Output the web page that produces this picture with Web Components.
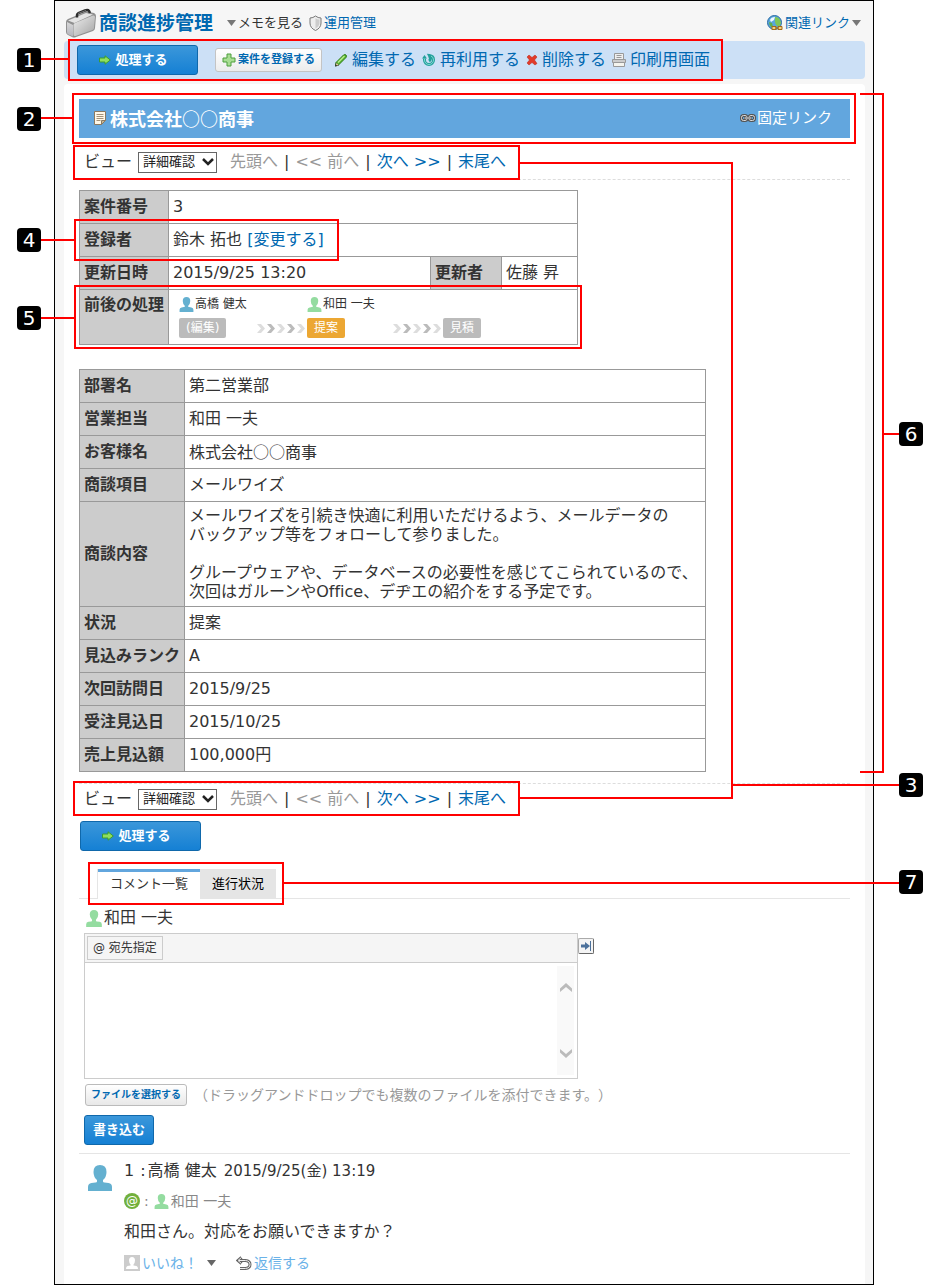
<!DOCTYPE html>
<html lang="ja">
<head>
<meta charset="UTF-8">
<meta name="viewport" content="width=device-width, initial-scale=1.0">
<title>商談進捗管理</title>
<style>
  body {
    margin: 0;
    background: #fff;
    color: #333;
    font-family: "DejaVu Sans", "Noto Sans CJK JP", sans-serif;
    font-size: 16px;
    font-variant-ligatures: none;
    line-height: 24px;
    text-spacing-trim: space-all;
  }
</style>
</head>
<body>
<guide-page></guide-page>

<script>
const baseStyles = `
  * { box-sizing: border-box; }
  a { color: #0068b1; text-decoration: none; }
  button, select, textarea { font-family: inherit; margin: 0; }
`;

const icons = {
  briefcase: ['0 0 32 32', `
    <defs>
      <linearGradient id="g" x1="0" y1="0" x2="1" y2="1"><stop offset="0" stop-color="#ededed"/><stop offset="1" stop-color="#a4a4a4"/></linearGradient>
      <linearGradient id="s" x1="0" y1="0" x2="0" y2="1"><stop offset="0" stop-color="#d8d8d8"/><stop offset="1" stop-color="#b4b4bc"/></linearGradient>
    </defs>
    <path d="M1 15q0-2 2-3L20 5q2-1 4 0l5 1q2 1 2 3l-1 12q0 2-2 3L11 30q-2 1-4 0l-4-2q-2-1-2-3z" fill="#909090"/>
    <path d="M2 15l6 3v11.500l-4.500-2Q2 27 2 25z" fill="url(#s)"/>
    <path d="M8.500 18q0-1.500 1.500-2l18-7.500q2-.5 2 1.500l-1 11q0 1.500-1.500 2L10.500 29q-2 .5-2-1.500z" fill="url(#g)"/>
    <path d="M3 13.500L21 6l7 1.500L9.500 16z" fill="#e4e4e4"/>
    <path d="M12 10.500V8q0-1 1.500-2L20 3.500q3-1 4 .5l1 2" fill="none" stroke="#2c2c2c" stroke-width="2.500"/>
    <path d="M13 6.500l8-3" stroke="#777"/>`],
  shield: ['0 0 13 16', `
    <path d="M6.500 1Q9 3 12 3v5q0 5-5.500 7.500Q1 13 1 8V3q3 0 5.500-2z" fill="#eee" stroke="#777"/>
    <path d="M6.500 3v10.500Q10.500 11 10.500 8V4.500Q8 4.500 6.500 3z" fill="#ccc"/>`],
  globe: ['0 0 16 16', `
    <circle cx="7.500" cy="7.500" r="7" fill="#5aa5dc" stroke="#2b6ca3"/>
    <path d="M8 2q4 0 5 3l1 3-2 4-3-2-1-3z" fill="#7fc656"/>
    <path d="M2 7l3 1 1 4-2 0Q2 10 2 7z" fill="#5fb04a"/>
    <path d="M3 5q1-3 5-3L7 5 4 7z" fill="#eef8ff"/>
    <path d="M5 11.500h4v3H5zM11 11.500h4v3h-4zM8 13h4" fill="#f3d080" stroke="#a36a17"/>`],
  arrow: ['0 0 12 10', '<path d="M.5 3H6V.8L11.300 5 6 9.200V7H.5z" fill="#8fdf5e" stroke="#3d9c2f"/>'],
  plus: ['0 0 14 14', '<path d="M5 1h4v4h4v4H9v4H5V9H1V5h4z" fill="#a8dd92" stroke="#4c9e3d"/>'],
  pencil: ['0 0 14 14', `
    <path d="M2 9.500L9.500 2q1.500-1 2.500 0t0 2.500L4.500 12l-3 1z" fill="#58b52e" stroke="#2f7d1c"/>
    <path d="M4 9.500L10.500 3" stroke="#b9ec8e" stroke-width="1.500"/>
    <path d="M1 13.500l1-4 3 3z" fill="#333"/><path d="M2.500 10l2 2-1.500.5-1-1z" fill="#f0d9a0"/>`],
  recycle: ['0 0 14 14', `
    <path d="M2.500 5.500v1.500a4.500 4.500 0 0 0 9 0q0-4-4-4.500 2 4-.5 5.500" fill="none" stroke="#23a09c" stroke-width="3"/>
    <path d="M2.500 5v2a4.500 4.500 0 0 0 9 0q0-3-2.500-4" fill="none" stroke="#7fd8d0"/>
    <path d="M0 5.500L2.500 2 5 5.500z" fill="#23a09c"/>`],
  cross: ['0 0 12 12', '<path d="M3 1l3 2.500L9 1l2 2-2.500 3L11 9.500 9 11 6 8.500 3 11 1 9l2.500-3L1 3z" fill="#e23b2a" stroke="#b92215" stroke-width=".5"/>'],
  printer: ['0 0 14 14', `
    <path d="M2.500 6V.5h9V6" fill="#eee" stroke="#999"/>
    <path d="M4.500 2.500h5M4.500 4.500h5" stroke="#999"/>
    <path d="M.5 6.500h13v3H.5z" fill="#ccc" stroke="#999"/>
    <path d="M1.500 9.500h11v4h-11z" fill="#f4f4ee" stroke="#999"/>`],
  note: ['0 0 12 14', `
    <path d="M.5.500h11v9l-4 4h-7z" fill="#fff8e8" stroke="#8a7a62"/>
    <path d="M2.500 3.500h7M2.500 5.500h7M2.500 7.500h7M2.500 9.500h4" stroke="#a2927b"/>
    <path d="M7.500 13.500v-4h4z" fill="#c9b895" stroke="#8a7a62"/>`],
  chain: ['0 0 16 8', `
    <g fill="none" stroke="#555" stroke-width="3"><rect x="1.500" y="1.500" width="5.500" height="5" rx="2"/><rect x="9" y="1.500" width="5.500" height="5" rx="2"/></g>
    <g fill="none" stroke="#ddd"><rect x="1.500" y="1.500" width="5.500" height="5" rx="2"/><rect x="9" y="1.500" width="5.500" height="5" rx="2"/></g>
    <path d="M4 4h8" stroke="#555" stroke-width="2.500"/><path d="M4.500 4h7" stroke="#eee"/>`],
  person: ['0 0 24 26', '<path d="M12 0q6.500 0 6.500 7 0 5-3.500 8v1.500q0 1 1.500 1l4 .5Q24 18.500 24 22v4H0v-4q0-3.500 3.500-4l4-.5q1.500 0 1.500-1V15Q5.500 12 5.500 7q0-7 6.500-7z" fill="currentColor"/>'],
  guest: ['0 0 16 16', '<path d="M0 0h16v16H0z" fill="#ccc"/><path d="M8 2q3 0 3 3.500 0 2-1.500 4v1l3 .5q1.500.500 1.500 3H2q0-2.500 1.500-3l3-.5v-1Q5 7.500 5 5.500 5 2 8 2z" fill="#fff"/>'],
  down: ['0 0 9 6', '<path d="M0 0h9L4.500 6z" fill="currentColor"/>'],
  chevrons: ['0 0 48 9', `
    <path d="M0 0h4l4 4.500L4 9H0l4-4.500zM20 0h4l4 4.500L24 9h-4l4-4.500zM40 0h4l4 4.500L44 9h-4l4-4.500z" fill="#ddd"/>
    <path d="M10 0h4l4 4.500L14 9h-4l4-4.500zM30 0h4l4 4.500L34 9h-4l4-4.500z" fill="#bbb"/>`],
  reply: ['0 0 16 14', `
    <path d="M5.500 1.500L2 4.500l3.500 3M3 4.500h6.500q4.500.5 4.500 4t-4.500 4H4" fill="none" stroke="#666" stroke-width="3"/>
    <path d="M5.500 1.500L2 4.500l3.500 3M3 4.500h6.500q4.500.5 4.500 4t-4.500 4H4" fill="none" stroke="#eee"/>`],
  expand: ['0 0 12 10', '<path d="M1 3.500h4V1l5 4-5 4V6.500H1z" fill="#4c719b"/><path d="M10.500 0v10" stroke="#4c719b"/>'],
  scrollUp: ['0 0 12 9', '<path d="M0 9V5.500L6 0l6 5.500V9L6 4z" fill="#bbb"/>'],
  scrollDown: ['0 0 12 9', '<path d="M0 0v3.500L6 9l6-5.500V0L6 5z" fill="#bbb"/>']
};

// <app-icon name="" w="" h="">
class AppIcon extends HTMLElement {
  connectedCallback() {
    const [box, shapes] = icons[this.getAttribute('name')];
    const w = this.getAttribute('w');
    const h = this.getAttribute('h');
    this.attachShadow({ mode: 'open' }).innerHTML = `
      <style>
        :host { display: inline-flex; flex: none; }
        svg { display: block; }
      </style>
      <svg viewBox="${box}" width="${w}" height="${h}" aria-hidden="true">${shapes}</svg>
    `;
  }
}
customElements.define('app-icon', AppIcon);

class ActionButton extends HTMLElement {
  connectedCallback() {
    this.attachShadow({ mode: 'open' }).innerHTML = `
      <style>
        ${baseStyles}
        :host { display: inline-block; vertical-align: top; }
        button {
          display: flex;
          align-items: center;
          justify-content: center;
          gap: 4px;
          height: 30px;
          padding: 0 8px;
          border: 1px solid #0f68ab;
          border-radius: 3px;
          background: linear-gradient(#3b97da, #1580d4);
          color: #fff;
          font-size: 13px;
          font-weight: bold;
          line-height: 20px;
          white-space: nowrap;
          cursor: pointer;
        }
        :host([kind="main"]) button { min-width: 121px; padding-right: 16px; }
        :host([kind="sub"]) button {
          height: 24px;
          padding: 0 5px;
          min-width: 107px;
          border-color: #c4c4c4;
          background: linear-gradient(#fff, #ececec);
          color: #0068b1;
          font-size: 11px;
          gap: 2px;
        }
        :host([kind="file"]) button {
          height: 22px;
          padding: 0 5px;
          border-color: #bbb;
          background: linear-gradient(#fff, #e8e8e8);
          color: #0068b1;
          font-size: 10px;
        }
      </style>
      <button type="button"><slot></slot></button>
    `;
  }
}
customElements.define('action-button', ActionButton);

class AppHeader extends HTMLElement {
  connectedCallback() {
    this.attachShadow({ mode: 'open' }).innerHTML = `
      <style>
        ${baseStyles}
        :host {
          display: flex;
          align-items: center;
          height: 40px;
          padding: 4px 12px 0 10px;
          font-size: 13px;
        }
        h1 { margin: 0 14px 0 2px; font-size: 19px; color: #0068b1; }
        .memo, .admin, .related { display: flex; align-items: center; gap: 2px; }
        .memo { color: #333; }
        .memo app-icon, .related app-icon[name="down"] { color: #777; }
        .admin { margin-left: 6px; }
        .related { margin-left: auto; }
      </style>
      <app-icon name="briefcase" w="32" h="32"></app-icon>
      <h1>商談進捗管理</h1>
      <a class="memo" href="#"><app-icon name="down" w="9" h="6"></app-icon>メモを見る</a>
      <a class="admin" href="#"><app-icon name="shield" w="13" h="16"></app-icon>運用管理</a>
      <a class="related" href="#"><app-icon name="globe" w="16" h="16"></app-icon>関連リンク<app-icon name="down" w="9" h="6"></app-icon></a>
    `;
  }
}
customElements.define('app-header', AppHeader);

class RecordToolbar extends HTMLElement {
  connectedCallback() {
    this.attachShadow({ mode: 'open' }).innerHTML = `
      <style>
        ${baseStyles}
        :host {
          display: flex;
          align-items: center;
          height: 38px;
          margin: 0 8px 0 9px;
          padding-left: 13px;
          border-radius: 4px;
          background: #cce0f6;
        }
        nav { display: flex; gap: 6px; margin-left: 12px; }
        nav a { display: flex; align-items: center; gap: 4px; white-space: nowrap; }
        action-button[kind="sub"] { margin-left: 17px; }
      </style>
      <action-button kind="main"><app-icon name="arrow" w="12" h="10"></app-icon>処理する</action-button>
      <action-button kind="sub"><app-icon name="plus" w="14" h="14"></app-icon>案件を登録する</action-button>
      <nav>
        <a href="#"><app-icon name="pencil" w="14" h="14"></app-icon>編集する</a>
        <a href="#"><app-icon name="recycle" w="14" h="14"></app-icon>再利用する</a>
        <a href="#"><app-icon name="cross" w="12" h="12"></app-icon>削除する</a>
        <a href="#"><app-icon name="printer" w="14" h="14"></app-icon>印刷用画面</a>
      </nav>
    `;
  }
}
customElements.define('record-toolbar', RecordToolbar);

class RecordTitle extends HTMLElement {
  connectedCallback() {
    this.attachShadow({ mode: 'open' }).innerHTML = `
      <style>
        ${baseStyles}
        :host {
          display: flex;
          align-items: center;
          justify-content: space-between;
          height: 39px;
          padding: 0 18px 2px 15px;
          background: #62a6de;
          color: #fff;
        }
        h2 {
          display: flex;
          align-items: center;
          gap: 4px;
          margin: 0;
          font-family: "Noto Sans CJK JP", sans-serif;
          font-size: 18px;
        }
        a { display: flex; align-items: center; gap: 1px; color: #fff; font-size: 15px; }
      </style>
      <h2><app-icon name="note" w="12" h="14"></app-icon><slot></slot></h2>
      <a href="#"><app-icon name="chain" w="16" h="8"></app-icon>固定リンク</a>
    `;
  }
}
customElements.define('record-title', RecordTitle);

class RecordPager extends HTMLElement {
  connectedCallback() {
    this.attachShadow({ mode: 'open' }).innerHTML = `
      <style>
        ${baseStyles}
        :host {
          display: flex;
          align-items: center;
          height: 42px;
          padding: 7px 0 0 5px;
          border-bottom: 1px dashed #ddd;
          white-space: nowrap;
        }
        :host([bottom]) {
          height: 31px;
          margin-top: 11px;
          padding-top: 0;
          border-bottom: 0;
          border-top: 1px dashed #ddd;
        }
        .picker { position: relative; display: flex; align-items: center; margin: 0 13px 0 6px; color: #222; }
        select {
          appearance: none;
          width: 79px;
          height: 21px;
          padding: 0 20px 0 4px;
          border: 1px solid #666;
          border-radius: 0;
          background: #fff;
          color: #222;
          font-size: 13px;
          line-height: 18px;
        }
        .picker svg { position: absolute; right: 3px; pointer-events: none; }
        nav { display: flex; gap: 6px; }
        .off { color: #999; }
      </style>
      <label for="view">ビュー</label>
      <span class="picker">
        <select id="view"><option>詳細確認</option></select>
        <svg width="12" height="8" viewBox="0 0 12 8"><path d="M1 1l5 5 5-5" fill="none" stroke="#222" stroke-width="2.500"/></svg>
      </span>
      <nav>
        <span class="off">先頭へ</span><span>|</span>
        <span class="off">&lt;&lt; 前へ</span><span>|</span>
        <a href="#">次へ &gt;&gt;</a><span>|</span>
        <a href="#">末尾へ</a>
      </nav>
    `;
  }
}
customElements.define('record-pager', RecordPager);

const tableStyles = `
  :host { display: block; }
  table { border-collapse: collapse; table-layout: fixed; max-width: 100%; }
  th, td { height: 33px; padding: 0 4px; border: 1px solid #999; text-align: left; }
  th { background: #ccc; white-space: nowrap; }
`;

class ProcessFlow extends HTMLElement {
  connectedCallback() {
    this.attachShadow({ mode: 'open' }).innerHTML = `
      <style>
        ${baseStyles}
        :host {
          display: grid;
          grid-template-columns: 128px 136px auto;
          grid-template-rows: 20px 20px;
          row-gap: 4px;
          justify-content: start;
          padding: 4px 6px 6px;
          font-size: 12px;
          line-height: 20px;
        }
        .who, .step { display: flex; align-items: center; }
        .step { justify-content: space-between; padding-right: 2px; }
        .who app-icon { color: #94dca0; margin-right: 1px; }
        .who .blue { color: #64b0d0; }
        .state { height: 20px; padding: 0 7px; border-radius: 2px; background: #bbb; color: #fff; }
        .now { background: #eca733; }
      </style>
      <span class="who"><app-icon class="blue" name="person" w="15" h="15"></app-icon>高橋 健太</span>
      <span class="who"><app-icon name="person" w="15" h="15"></app-icon>和田 一夫</span>
      <span></span>
      <span class="step"><span class="state">(編集)</span><app-icon name="chevrons" w="48" h="9"></app-icon></span>
      <span class="step"><span class="state now">提案</span><app-icon name="chevrons" w="48" h="9"></app-icon></span>
      <span class="step"><span class="state">見積</span></span>
    `;
  }
}
customElements.define('process-flow', ProcessFlow);

class RecordSummary extends HTMLElement {
  connectedCallback() {
    this.attachShadow({ mode: 'open' }).innerHTML = `
      <style>
        ${baseStyles}
        ${tableStyles}
        :host { margin-top: 10px; }
        table { width: 499px; }
        .flow th { vertical-align: top; padding-top: 3px; }
        .flow td { height: 55px; }
      </style>
      <table>
        <colgroup><col style="width: 89px"><col style="width: 262px"><col style="width: 71px"><col></colgroup>
        <tr><th>案件番号</th><td colspan="3">3</td></tr>
        <tr><th>登録者</th><td colspan="3">鈴木 拓也 <a href="#">[変更する]</a></td></tr>
        <tr><th>更新日時</th><td>2015/9/25 13:20</td><th>更新者</th><td>佐藤 昇</td></tr>
        <tr class="flow"><th>前後の処理</th><td colspan="3"><process-flow></process-flow></td></tr>
      </table>
    `;
  }
}
customElements.define('record-summary', RecordSummary);

class RecordDetail extends HTMLElement {
  connectedCallback() {
    this.attachShadow({ mode: 'open' }).innerHTML = `
      <style>
        ${baseStyles}
        ${tableStyles}
        :host { margin-top: 24px; }
        table { width: 627px; }
        .kana { padding-bottom: 2px; font-family: "Noto Sans CJK JP", sans-serif; }
        .long { height: 105px; padding: 0 0 2px 4px; line-height: 19px; }
      </style>
      <table>
        <colgroup><col style="width: 105px"><col></colgroup>
        <tr><th>部署名</th><td>第二営業部</td></tr>
        <tr><th>営業担当</th><td>和田 一夫</td></tr>
        <tr><th>お客様名</th><td class="kana">株式会社○○商事</td></tr>
        <tr><th>商談項目</th><td>メールワイズ</td></tr>
        <tr><th>商談内容</th><td class="long">メールワイズを引続き快適に利用いただけるよう、メールデータの<br>バックアップ等をフォローして参りました。<br><br>グループウェアや、データベースの必要性を感じてこられているので、<br>次回はガルーンやOffice、デヂエの紹介をする予定です。</td></tr>
        <tr><th>状況</th><td>提案</td></tr>
        <tr><th>見込みランク</th><td>A</td></tr>
        <tr><th>次回訪問日</th><td>2015/9/25</td></tr>
        <tr><th>受注見込日</th><td>2015/10/25</td></tr>
        <tr><th>売上見込額</th><td>100,000円</td></tr>
      </table>
    `;
  }
}
customElements.define('record-detail', RecordDetail);

class CommentTabs extends HTMLElement {
  connectedCallback() {
    this.attachShadow({ mode: 'open' }).innerHTML = `
      <style>
        ${baseStyles}
        :host {
          display: flex;
          height: 30px;
          margin-top: 18px;
          padding-left: 19px;
          border-bottom: 1px solid #e5e5e5;
        }
        button {
          height: 30px;
          padding: 0 12px;
          border: 0;
          background: #e5e5e5;
          color: #000;
          font-size: 13px;
          line-height: 20px;
        }
        .active {
          padding-bottom: 3px;
          border-top: 3px solid #62a6de;
          box-shadow: -1px 0 #e5e5e5;
          background: #fff;
          color: #333;
        }
      </style>
      <button type="button" class="active">コメント一覧</button>
      <button type="button">進行状況</button>
    `;
  }
}
customElements.define('comment-tabs', CommentTabs);

class CommentForm extends HTMLElement {
  connectedCallback() {
    this.attachShadow({ mode: 'open' }).innerHTML = `
      <style>
        ${baseStyles}
        :host { display: block; padding: 7px 5px 8px; border-bottom: 1px solid #e5e5e5; }
        .user { display: flex; align-items: center; gap: 2px; padding-left: 2px; height: 24px; }
        .user app-icon { color: #94dca0; }
        .row { display: flex; align-items: flex-start; margin-top: 3px; }
        .editor { width: 494px; border: 1px solid #ccc; }
        .bar { height: 29px; padding: 2px; border-bottom: 1px solid #ccc; background: #f5f5f5; }
        .bar button {
          display: block;
          height: 24px;
          padding: 0 5px;
          border: 1px solid #ccc;
          background: #f5f5f5;
          color: #333;
          font-size: 12px;
          line-height: 20px;
        }
        .body { display: flex; height: 115px; padding: 3px; }
        textarea { flex: 1; min-width: 0; padding: 2px; border: 0; outline: 0; resize: none; overflow: hidden; font-size: 16px; }
        .scroll {
          display: flex;
          flex-direction: column;
          align-items: center;
          justify-content: space-between;
          width: 17px;
          padding: 17px 0;
          background: #f9f9f9;
        }
        .wide {
          display: flex;
          align-items: center;
          justify-content: center;
          width: 16px;
          height: 16px;
          margin-top: 5px;
          padding: 0;
          border: 1px solid #aaa;
          border-right-color: #666;
          border-bottom-color: #666;
          border-radius: 2px;
          background: #f4f4f4;
        }
        .file { display: flex; align-items: center; gap: 7px; height: 22px; margin: 5px 0 9px 1px; }
        .hint { color: #999; font-size: 14px; white-space: nowrap; }
      </style>
      <div class="user"><app-icon name="person" w="16" h="17"></app-icon>和田 一夫</div>
      <div class="row">
        <div class="editor">
          <div class="bar"><button type="button">@ 宛先指定</button></div>
          <div class="body">
            <textarea aria-label="コメント"></textarea>
            <div class="scroll">
              <app-icon name="scrollUp" w="12" h="9"></app-icon>
              <app-icon name="scrollDown" w="12" h="9"></app-icon>
            </div>
          </div>
        </div>
        <button type="button" class="wide"><app-icon name="expand" w="12" h="10"></app-icon></button>
      </div>
      <div class="file">
        <action-button kind="file">ファイルを選択する</action-button>
        <span class="hint">（ドラッグアンドドロップでも複数のファイルを添付できます。）</span>
      </div>
      <action-button>書き込む</action-button>
    `;
  }
}
customElements.define('comment-form', CommentForm);

class CommentItem extends HTMLElement {
  connectedCallback() {
    this.attachShadow({ mode: 'open' }).innerHTML = `
      <style>
        ${baseStyles}
        :host { display: flex; gap: 12px; padding: 5px 9px 8px; }
        .avatar { margin-top: 6px; color: #64b0d0; }
        .main { display: grid; grid-template-rows: 24px 24px 26px 24px; row-gap: 6px; }
        .line { display: flex; align-items: center; white-space: nowrap; }
        time { margin-left: 7px; font-size: 15px; }
        .sep { margin: 0 2px 0 6px; }
        .to, .foot { font-size: 14px; }
        .to { color: #888; }
        .to app-icon { color: #94dca0; margin: 0 2px 0 5px; }
        .at {
          display: flex;
          align-items: center;
          justify-content: center;
          width: 16px;
          height: 16px;
          border-radius: 50%;
          background: #72b03c;
          color: #fff;
          font-size: 12px;
          line-height: 16px;
        }
        .colon { margin-left: 4px; }
        .foot a { display: flex; align-items: center; gap: 2px; color: #6ab2e8; }
        .foot > app-icon { margin: 0 20px 0 9px; color: #666; }
      </style>
      <app-icon class="avatar" name="person" w="24" h="26"></app-icon>
      <div class="main">
        <div class="line">1<span class="sep">:</span>高橋 健太<time datetime="2015-09-25T13:19">2015/9/25(金) 13:19</time></div>
        <div class="line to"><span class="at">@</span><span class="colon">:</span><app-icon name="person" w="15" h="15"></app-icon>和田 一夫</div>
        <div class="line">和田さん。対応をお願いできますか？</div>
        <div class="line foot">
          <a href="#"><app-icon name="guest" w="16" h="16"></app-icon>いいね！</a>
          <app-icon name="down" w="9" h="6"></app-icon>
          <a href="#"><app-icon name="reply" w="16" h="14"></app-icon>返信する</a>
        </div>
      </div>
    `;
  }
}
customElements.define('comment-item', CommentItem);

// Numbered callouts laid over the screen
class CalloutLayer extends HTMLElement {
  connectedCallback() {
    const boxes = [
      [68, 39, 655, 42], [72, 93, 784, 51], [73, 145, 447, 35], [73, 781, 447, 35],
      [74, 219, 265, 42], [74, 285, 508, 64], [88, 862, 196, 43]
    ];
    const badges = [[1, 17, 48], [2, 17, 107], [4, 17, 228], [5, 17, 306], [6, 899, 422], [3, 899, 773], [7, 899, 870]];
    this.attachShadow({ mode: 'open' }).innerHTML = `
      <style>
        :host { position: absolute; top: 0; left: 0; pointer-events: none; }
        svg { display: block; }
        .badge {
          position: absolute;
          width: 24px;
          height: 24px;
          border-radius: 4px;
          background: #000;
          color: #fff;
          font-size: 20px;
          line-height: 24px;
          text-align: center;
        }
      </style>
      <svg width="932" height="1285" fill="none" stroke="#f00" stroke-width="2">
        ${boxes.map(([x, y, w, h]) => `<rect x="${x + 1}" y="${y + 1}" width="${w - 2}" height="${h - 2}"/>`).join('')}
        <path d="M41 59H68M41 118H72M41 240H74M41 318H74"/>
        <path d="M520 163H732V798H520M732 785H899"/>
        <path d="M860 94H883V772H860M883 434H899"/>
        <path d="M284 883H899"/>
      </svg>
      ${badges.map(([n, x, y]) => `<span class="badge" style="left: ${x}px; top: ${y}px">${n}</span>`).join('')}
    `;
  }
}
customElements.define('callout-layer', CalloutLayer);

class GuidePage extends HTMLElement {
  connectedCallback() {
    this.attachShadow({ mode: 'open' }).innerHTML = `
      <style>
        ${baseStyles}
        :host { display: block; position: relative; }
        .screen {
          display: flex;
          flex-direction: column;
          min-height: 100vh;
          margin: 0 58px 0 54px;
          border: 1px solid #000;
          background: #f6f6f6;
        }
        main {
          flex: 1;
          margin: 5px 8px 0 9px;
          padding: 15px 15px 0;
          border-radius: 4px 4px 0 0;
          background: #fff;
        }
        .again { display: block; margin: 7px 0 0 1px; }
      </style>
      <div class="screen">
        <app-header></app-header>
        <record-toolbar></record-toolbar>
        <main>
          <record-title>株式会社○○商事</record-title>
          <record-pager></record-pager>
          <record-summary></record-summary>
          <record-detail></record-detail>
          <record-pager bottom></record-pager>
          <action-button class="again" kind="main"><app-icon name="arrow" w="12" h="10"></app-icon>処理する</action-button>
          <comment-tabs></comment-tabs>
          <comment-form></comment-form>
          <comment-item></comment-item>
        </main>
      </div>
      <callout-layer></callout-layer>
    `;
  }
}
customElements.define('guide-page', GuidePage);
</script>
</body>
</html>
